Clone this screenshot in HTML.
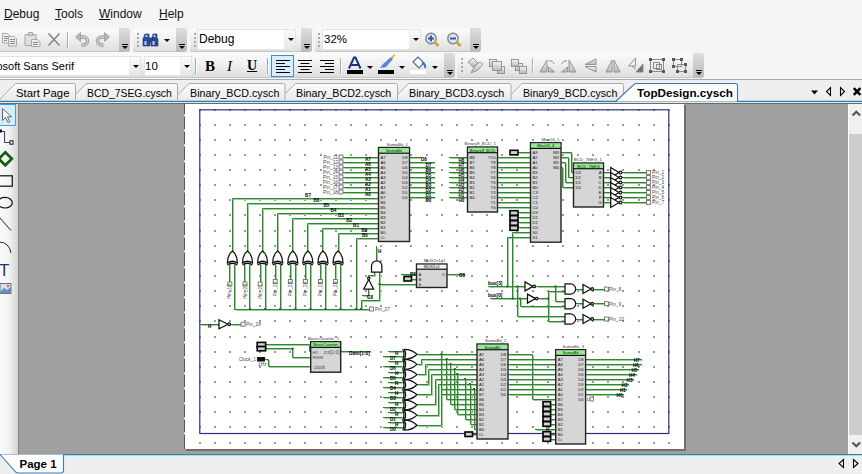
<!DOCTYPE html>
<html><head><meta charset="utf-8">
<style>
*{margin:0;padding:0;box-sizing:border-box}
html,body{width:862px;height:474px;overflow:hidden;background:#f5f5f5;font-family:"Liberation Sans",sans-serif;position:relative}
.menu{position:absolute;top:7px;font-size:12px;color:#111;line-height:14px}
.menu u{text-decoration:underline}
.seg{position:absolute;background:linear-gradient(#fbfbfb,#f0f0f0 45%,#dcdcdc);border-radius:3px 0 0 3px;box-shadow:inset 0 -1px #c6c6c6}
.chev{position:absolute;background:linear-gradient(#dedede,#b9b9b9);border-radius:0 3px 3px 0}
.chev i{position:absolute;left:2.5px;bottom:7px;width:6px;height:1.5px;background:#000}
.chev b{position:absolute;left:2.5px;bottom:3px;width:0;height:0;border-left:3px solid transparent;border-right:3px solid transparent;border-top:3px solid #000}
.gd{position:absolute;width:2px;height:2px;background:#a8a8a8}
.arr{position:absolute;width:0;height:0;border-left:3px solid transparent;border-right:3px solid transparent;border-top:3px solid #000}
.sep{position:absolute;width:2px;background:#a8a8a8;border-right:1px solid #fff}
.combo{position:absolute;background:#fff;border:1px solid #e4e4e4}
.combo span{position:absolute;top:2px;font-size:12px;color:#000;white-space:nowrap;line-height:14px}
.cbtn{position:absolute;right:0;top:0;bottom:0;background:linear-gradient(#fafafa,#e6e6e6);border-left:1px solid #eee}
.ico{position:absolute;left:0;top:0}
.fmt{position:absolute;color:#000;line-height:16px}
.hl{position:absolute;background:#d8eefb;border:1px solid #3d8ed0}

.w{fill:none;stroke:#378237;stroke-width:1;stroke-linecap:square}
.wl{fill:none;stroke:#98d098;stroke-width:1}
.j{fill:#2a6a2a}
.g{fill:#fff;stroke:#111;stroke-width:1.25}
.blk{fill:#d6d6d6;stroke:#222;stroke-width:1.4}
.pin{fill:#f4f4f4;stroke:#666;stroke-width:0.8}
.pin2{fill:#d0d0d0;stroke:#000;stroke-width:1.6}
text{font-family:"Liberation Sans",sans-serif}
.t{font-size:4.6px;fill:#000;font-weight:bold}
.tl{font-size:4.8px;fill:#000;font-weight:bold}
.tb{font-size:4.2px;fill:#111}
.tp{font-size:4.8px;fill:#4a4a4a}
.tt{font-size:4.4px;fill:#333}
.th{font-size:4.2px;fill:#0a200a}
.tab{position:absolute;top:86.5px;font-size:11.5px;color:#000;white-space:nowrap;line-height:13px}
</style></head><body>
<div class="menu" style="left:4px"><u>D</u>ebug</div>
<div class="menu" style="left:55px"><u>T</u>ools</div>
<div class="menu" style="left:99px"><u>W</u>indow</div>
<div class="menu" style="left:159px"><u>H</u>elp</div>
<div class="seg" style="left:-6px;top:28px;width:125px;height:24px;"></div><div class="chev" style="left:119px;top:28px;width:11px;height:24px;"><i></i><b></b></div>
<div class="seg" style="left:133px;top:28px;width:43px;height:24px;"></div><div class="chev" style="left:176px;top:28px;width:11px;height:24px;"><i></i><b></b></div>
<div class="seg" style="left:190px;top:28px;width:111px;height:24px;"></div><div class="chev" style="left:301px;top:28px;width:11px;height:24px;"><i></i><b></b></div>
<div class="seg" style="left:315px;top:28px;width:155px;height:24px;"></div><div class="chev" style="left:470px;top:28px;width:11px;height:24px;"><i></i><b></b></div>
<div class="seg" style="left:-6px;top:53px;width:450px;height:25px;"></div><div class="chev" style="left:444px;top:53px;width:11px;height:25px;"><i></i><b></b></div>
<div class="seg" style="left:457px;top:53px;width:236px;height:25px;"></div><div class="chev" style="left:693px;top:53px;width:11px;height:25px;"><i></i><b></b></div>

<svg class="ico" width="862" height="80" viewBox="0 0 862 80">
 <g stroke="#a9a9a9" fill="#ececec" stroke-width="1">
  <path d="M2.5 33.5h5l2.5 2.5v7h-7.5z"/>
  <path d="M8.5 36.5h5.5l2.5 2.5v7h-8z"/>
  <path d="M25 34.5h11v11h-11z" fill="#e0e0e0"/>
  <path d="M28.5 32.5h4v3h-4z" fill="#d0d0d0"/>
  <path d="M31.5 39.5h6l2.5 2.5v4.5h-8.5z"/>
 </g>
 <g stroke="#8c8c8c" stroke-width="1"><path d="M4 36.5h4M4 38.5h4M4 40.5h3M10 39.5h5M10 41.5h5M10 43.5h5M33 42.5h5M33 44.5h5"/></g>
 <path d="M48.5 33.5l11 12M59.5 33.5l-11 12" stroke="#8a8a8a" stroke-width="1.7"/>
 <path d="M79 37h4.5a4 4 0 0 1 0 8h-2" stroke="#9c9c9c" stroke-width="3.4" fill="none"/>
 <path d="M79 37h4.5a4 4 0 0 1 0 8h-2" stroke="#cfcfcf" stroke-width="1.6" fill="none"/>
 <path d="M75.5 37l5-4.5v9z" fill="#b4b4b4" stroke="#9c9c9c" stroke-width="0.8"/>
 <path d="M106 37h-4.5a4 4 0 0 0 0 8h2" stroke="#9c9c9c" stroke-width="3.4" fill="none"/>
 <path d="M106 37h-4.5a4 4 0 0 0 0 8h2" stroke="#cfcfcf" stroke-width="1.6" fill="none"/>
 <path d="M109.5 37l-5-4.5v9z" fill="#b4b4b4" stroke="#9c9c9c" stroke-width="0.8"/>
 <g fill="#2a4c9c" stroke="#1a2f6a" stroke-width="0.6">
  <path d="M145 34h4v4h1v8h-7v-7z"/><path d="M153 34h4v4l1 1v7h-7v-8h1z"/>
  <rect x="149.5" y="38" width="3" height="4"/>
 </g>
 <g fill="#b8d0f4"><rect x="144.5" y="41" width="2" height="4"/><rect x="152.5" y="41" width="2" height="4"/><rect x="145.5" y="35" width="2" height="2"/><rect x="153.5" y="35" width="2" height="2"/></g>
 <circle cx="431" cy="38.5" r="5.2" fill="#dde8f6" stroke="#7a8590" stroke-width="1.4"/>
 <path d="M428 38.5h6M431 35.5v6" stroke="#3a5a90" stroke-width="2"/>
 <path d="M434.5 42l4 4" stroke="#c8a840" stroke-width="3"/>
 <circle cx="453" cy="38.5" r="5.2" fill="#dde8f6" stroke="#7a8590" stroke-width="1.4"/>
 <path d="M450 38.5h6" stroke="#3a5a90" stroke-width="2"/>
 <path d="M456.5 42l4 4" stroke="#c8a840" stroke-width="3"/>
</svg>
<div class="sep" style="left:67px;top:32px;height:16px"></div>
<div class="gd" style="left:137px;top:33px"></div><div class="gd" style="left:137px;top:37px"></div><div class="gd" style="left:137px;top:41px"></div><div class="gd" style="left:137px;top:45px"></div>
<div class="arr" style="left:164px;top:39px;border-top-color:#000"></div>
<div class="gd" style="left:194px;top:33px"></div><div class="gd" style="left:194px;top:37px"></div><div class="gd" style="left:194px;top:41px"></div><div class="gd" style="left:194px;top:45px"></div>
<div class="combo" style="left:197px;top:29px;width:99px;height:21px"><span style="left:1px;font-size:12px">Debug</span><div class="cbtn" style="width:11px"></div></div><div class="arr" style="left:288px;top:38px;border-top-color:#000"></div>
<div class="gd" style="left:318px;top:33px"></div><div class="gd" style="left:318px;top:37px"></div><div class="gd" style="left:318px;top:41px"></div><div class="gd" style="left:318px;top:45px"></div>
<div class="combo" style="left:322px;top:29px;width:99px;height:21px"><span style="left:1px;font-size:11.5px">32%</span><div class="cbtn" style="width:11px"></div></div><div class="arr" style="left:413px;top:38px;border-top-color:#000"></div>
<div class="combo" style="left:-6px;top:56px;width:147px;height:20px"><span style="left:1.4px;font-size:11px">osoft Sans Serif</span><div class="cbtn" style="width:11px"></div></div><div class="arr" style="left:133px;top:65px;border-top-color:#000"></div>
<div class="combo" style="left:144px;top:56px;width:48px;height:20px"><span style="left:0px;font-size:11.5px">10</span><div class="cbtn" style="width:11px"></div></div><div class="arr" style="left:184px;top:65px;border-top-color:#000"></div>
<div class="sep" style="left:195px;top:58px;height:16px"></div>
<div class="fmt" style="left:205px;top:58px;font-family:'Liberation Serif',serif;font-weight:bold;font-size:15px">B</div>
<div class="fmt" style="left:227px;top:58px;font-family:'Liberation Serif',serif;font-style:italic;font-size:15px">I</div>
<div class="fmt" style="left:247px;top:58px;font-family:'Liberation Serif',serif;font-weight:bold;font-size:14px;text-decoration:underline">U</div>
<div class="sep" style="left:267px;top:58px;height:16px"></div>
<div class="hl" style="left:271px;top:55px;width:23px;height:22px"></div>

<svg class="ico" width="862" height="80" viewBox="0 0 862 80">
 <g stroke="#000" stroke-width="1.2">
  <path d="M276 60.5h14M276 63.5h9M276 66.5h14M276 69.5h9M276 72.5h14"/>
  <path d="M298 60.5h14M300.5 63.5h9M298 66.5h14M300.5 69.5h9M298 72.5h14"/>
  <path d="M320 60.5h14M325 63.5h9M320 66.5h14M325 69.5h9M320 72.5h14"/>
 </g>
 <path d="M347 70h16v4h-16z" fill="#000"/>
 <path d="M349 68.5l5-11h1.5l5 11M351 65h8" stroke="#1f2f80" stroke-width="2" fill="none"/>
 <path d="M378 70h16v4h-16z" fill="#000"/>
 <path d="M380 68l3-4 8-7 2 2-7 8z" fill="#5a86d0"/><path d="M391 57l3-3 1.5 1.5-3 3z" fill="#e8c040"/>
 <path d="M410 70h16v4h-16z" fill="#fff"/>
 <path d="M413 62l5-5 6 6-5 5z" fill="#fff" stroke="#4a6aa0" stroke-width="1.2"/><path d="M422 63q4 1 3 5" stroke="#3a70c0" stroke-width="2" fill="none"/>
</svg>
<div class="sep" style="left:340px;top:58px;height:16px"></div>
<div class="arr" style="left:367px;top:66px;border-top-color:#000"></div>
<div class="arr" style="left:399px;top:66px;border-top-color:#000"></div>
<div class="arr" style="left:432px;top:66px;border-top-color:#000"></div>
<div class="gd" style="left:461px;top:58px"></div><div class="gd" style="left:461px;top:62px"></div><div class="gd" style="left:461px;top:66px"></div><div class="gd" style="left:461px;top:70px"></div>

<svg class="ico" width="862" height="80" viewBox="0 0 862 80">
 <defs><linearGradient id="ig" x1="0" y1="0" x2="0" y2="1"><stop offset="0" stop-color="#f4f4f4"/><stop offset="1" stop-color="#b8b8b8"/></linearGradient></defs>
 <g stroke="#8e8e8e" stroke-width="0.9" fill="url(#ig)">
  <path d="M468 62l5-4 5 5-5 4z"/><path d="M471 73l3-6 6-5 3 2-5 6z"/>
  <rect x="489.5" y="59.5" width="7" height="7"/><rect x="497.5" y="66.5" width="7" height="7"/><rect x="492.5" y="61.5" width="9" height="9"/>
  <rect x="515.5" y="63.5" width="7" height="7"/><rect x="511.5" y="59.5" width="7" height="7"/><rect x="519.5" y="66.5" width="7" height="7"/>
 </g>
 <path d="M532.5 58v15" stroke="#b0b0b0"/><path d="M533.5 58v15" stroke="#fff"/>
 <g fill="url(#ig)" stroke="#8a8a8a" stroke-width="0.9">
  <path d="M540 72l7-12v12z"/><path d="M548.5 72v-5l6 5z"/>
  <path d="M576 72l-7-12v12z"/><path d="M567.5 72v-5l-6 5z"/>
  <path d="M596 59l-11 5.5h11z"/><path d="M596 72l-11-5.5h11z"/>
  <path d="M612 60l-6 12h6z"/><path d="M614 60l6 12h-6z"/>
  <path d="M628.5 66l7-8v8z" fill="none"/><path d="M643 64l-7 8h7z" fill="#707070"/>
 </g>
 <path d="M549 61a4 4 0 0 1 5 3M567 61a4 4 0 0 0-5 3M632 66l4 3" stroke="#8a8a8a" fill="none"/>
 <g fill="none" stroke="#8a8a8a" stroke-width="1">
  <rect x="650.5" y="59.5" width="13" height="12"/><rect x="653.5" y="62.5" width="6" height="6"/><rect x="656.5" y="64.5" width="5" height="5"/>
  <rect x="673.5" y="59.5" width="8" height="7"/><rect x="677.5" y="64.5" width="8" height="7"/>
 </g>
 <g fill="#585858"><path d="M649 58h3v3h-3zM662 58h3v3h-3zM649 70h3v3h-3zM662 70h3v3h-3z"/><path d="M672 58h3v3h-3zM680 58h3v3h-3zM676 70h3v3h-3zM684 70h3v3h-3zM684 63h3v3h-3zM672 65h3v3h-3z"/></g>
</svg>
<div style="position:absolute;left:0;top:79px;width:862px;height:1px;background:#a9a9a9"></div>
<div style="position:absolute;left:0;top:80px;width:862px;height:22px;background:#efefef"></div>
<div style="position:absolute;left:0;top:454px;width:862px;height:20px;background:#efefef"></div>
<svg class="ico" width="862" height="110" viewBox="0 0 862 110">
<defs><linearGradient id="tg" x1="0" y1="0" x2="0" y2="1"><stop offset="0" stop-color="#fdfdfd"/><stop offset="1" stop-color="#e9e9e9"/></linearGradient></defs>
<path d="M505.0 100.5 L522.0 83.5 H621.5 Q623.5 83.5 623.5 85.5 V100.5" fill="url(#tg)" stroke="#a9a9a9" stroke-width="1"/>
<path d="M391.5 100.5 L408.5 83.5 H509.0 Q511.0 83.5 511.0 85.5 V100.5" fill="url(#tg)" stroke="#a9a9a9" stroke-width="1"/>
<path d="M278.5 100.5 L295.5 83.5 H395.5 Q397.5 83.5 397.5 85.5 V100.5" fill="url(#tg)" stroke="#a9a9a9" stroke-width="1"/>
<path d="M172.0 100.5 L189.0 83.5 H283.0 Q285.0 83.5 285.0 85.5 V100.5" fill="url(#tg)" stroke="#a9a9a9" stroke-width="1"/>
<path d="M69.5 100.5 L86.5 83.5 H175.5 Q177.5 83.5 177.5 85.5 V100.5" fill="url(#tg)" stroke="#a9a9a9" stroke-width="1"/>
<path d="M-1.5 100.5 L15.5 83.5 H73.5 Q75.5 83.5 75.5 85.5 V100.5" fill="url(#tg)" stroke="#a9a9a9" stroke-width="1"/>
<path d="M0 100.5H862" stroke="#a6daf2" stroke-width="1"/><path d="M0 101.5H616M737.5 101.5H862" stroke="#3c78a8" stroke-width="1"/>
<path d="M615.5 101.5 L635 83.5 H735.5 Q737.5 83.5 737.5 85.5 V101.5 Z" fill="#fff" stroke="#3a7ab0" stroke-width="1.1"/>
<path d="M616.8 102.2 H736.8" stroke="#fff" stroke-width="1.4"/>
<path d="M811 90.5h7l-3.5 4z" fill="#000"/>
<path d="M830.5 87.5v8l-4-4z" fill="none" stroke="#000" stroke-width="1.1"/>
<path d="M840.5 87.5v8l4-4z" fill="none" stroke="#000" stroke-width="1.1"/>
<path d="M853.8 88.2l6.6 6.6M860.4 88.2l-6.6 6.6" stroke="#000" stroke-width="2.5"/>
</svg>
<div class="tab" style="left:16px;transform:scaleX(0.983);transform-origin:0 0">Start Page</div>
<div class="tab" style="left:87px;transform:scaleX(0.903);transform-origin:0 0">BCD_7SEG.cysch</div>
<div class="tab" style="left:189.5px;transform:scaleX(0.932);transform-origin:0 0">Binary_BCD.cysch</div>
<div class="tab" style="left:296px;transform:scaleX(0.932);transform-origin:0 0">Binary_BCD2.cysch</div>
<div class="tab" style="left:409px;transform:scaleX(0.932);transform-origin:0 0">Binary_BCD3.cysch</div>
<div class="tab" style="left:522.5px;transform:scaleX(0.922);transform-origin:0 0">Binary9_BCD.cysch</div>
<div class="tab" style="left:637px;font-weight:bold;transform:scaleX(1.017);transform-origin:0 0">TopDesign.cysch</div>
<div style="position:absolute;left:0;top:102px;width:862px;height:1px;background:#e6e6e6"></div>
<div style="position:absolute;left:0;top:103px;width:862px;height:1px;background:#6a6a6a"></div>
<div id="tbx" style="position:absolute;left:0;top:104px;width:18px;height:350px;background:linear-gradient(90deg,#fafafa,#f2f2f2 50%,#d4d4d4)"></div>
<div style="position:absolute;left:18px;top:104px;width:830px;height:350px;background:#a0a0a0;border-left:1px solid #808080"></div>
<div style="position:absolute;left:848px;top:104px;width:14px;height:350px;background:#f0f0f0;border-left:1px solid #fff"></div>
<div style="position:absolute;left:849px;top:134px;width:13px;height:301px;background:#cdcdcd"></div>
<svg class="ico" width="862" height="474" viewBox="0 0 862 474"><path d="M852.5 115.5l3.8-3.8 3.8 3.8M852.5 442.5l3.8 3.8 3.8-3.8" fill="none" stroke="#555" stroke-width="2.2"/></svg>
<div style="position:absolute;left:0;top:454px;width:862px;height:1px;background:#3f7fae"></div>
<div style="position:absolute;left:0;top:455px;width:862px;height:1px;background:#a6daf2"></div>
<svg class="ico" width="862" height="474" viewBox="0 0 862 474"><path d="M0 454.5 L16 472.3 Q17 473 19 473 H61 Q63.5 473 63.5 470.5 V454.5" fill="#fff" stroke="#3a7fb5" stroke-width="1.1"/><path d="M843.5 459.5v8l-4.5-4z M853.5 459.5v8l4.5-4z" fill="none" stroke="#000" stroke-width="1.1"/></svg>
<div class="tab" style="left:19.5px;top:458px;font-weight:bold;font-size:11.5px">Page 1</div>
<div style="position:absolute;left:186px;top:105px;width:500px;height:346px;background:#6e6e6e"></div>
<div style="position:absolute;left:184px;top:104px;width:500px;height:345px;background:#fff"></div>
<div style="position:absolute;left:184px;top:104px;width:1px;height:345px;background:repeating-linear-gradient(#585858 0 13.14px,#fff 13.14px 15.14px);background-position:0 -2.6px"></div>
<svg class="ico" width="862" height="474" viewBox="0 0 862 474"><defs><clipPath id="pc"><rect x="185" y="103" width="499" height="346"/></clipPath></defs><g clip-path="url(#pc)"><path d="M199 109h2v2h-2zM199 124h2v2h-2zM199 139h2v2h-2zM199 154h2v2h-2zM199 169h2v2h-2zM199 184h2v2h-2zM199 199h2v2h-2zM199 214h2v2h-2zM199 230h2v2h-2zM199 245h2v2h-2zM199 260h2v2h-2zM199 275h2v2h-2zM199 290h2v2h-2zM199 305h2v2h-2zM199 320h2v2h-2zM199 336h2v2h-2zM199 351h2v2h-2zM199 366h2v2h-2zM199 381h2v2h-2zM199 396h2v2h-2zM199 411h2v2h-2zM199 426h2v2h-2zM199 442h2v2h-2zM214 109h2v2h-2zM214 124h2v2h-2zM214 139h2v2h-2zM214 154h2v2h-2zM214 169h2v2h-2zM214 184h2v2h-2zM214 199h2v2h-2zM214 214h2v2h-2zM214 230h2v2h-2zM214 245h2v2h-2zM214 260h2v2h-2zM214 275h2v2h-2zM214 290h2v2h-2zM214 305h2v2h-2zM214 320h2v2h-2zM214 336h2v2h-2zM214 351h2v2h-2zM214 366h2v2h-2zM214 381h2v2h-2zM214 396h2v2h-2zM214 411h2v2h-2zM214 426h2v2h-2zM214 442h2v2h-2zM229 109h2v2h-2zM229 124h2v2h-2zM229 139h2v2h-2zM229 154h2v2h-2zM229 169h2v2h-2zM229 184h2v2h-2zM229 199h2v2h-2zM229 214h2v2h-2zM229 230h2v2h-2zM229 245h2v2h-2zM229 260h2v2h-2zM229 275h2v2h-2zM229 290h2v2h-2zM229 305h2v2h-2zM229 320h2v2h-2zM229 336h2v2h-2zM229 351h2v2h-2zM229 366h2v2h-2zM229 381h2v2h-2zM229 396h2v2h-2zM229 411h2v2h-2zM229 426h2v2h-2zM229 442h2v2h-2zM244 109h2v2h-2zM244 124h2v2h-2zM244 139h2v2h-2zM244 154h2v2h-2zM244 169h2v2h-2zM244 184h2v2h-2zM244 199h2v2h-2zM244 214h2v2h-2zM244 230h2v2h-2zM244 245h2v2h-2zM244 260h2v2h-2zM244 275h2v2h-2zM244 290h2v2h-2zM244 305h2v2h-2zM244 320h2v2h-2zM244 336h2v2h-2zM244 351h2v2h-2zM244 366h2v2h-2zM244 381h2v2h-2zM244 396h2v2h-2zM244 411h2v2h-2zM244 426h2v2h-2zM244 442h2v2h-2zM259 109h2v2h-2zM259 124h2v2h-2zM259 139h2v2h-2zM259 154h2v2h-2zM259 169h2v2h-2zM259 184h2v2h-2zM259 199h2v2h-2zM259 214h2v2h-2zM259 230h2v2h-2zM259 245h2v2h-2zM259 260h2v2h-2zM259 275h2v2h-2zM259 290h2v2h-2zM259 305h2v2h-2zM259 320h2v2h-2zM259 336h2v2h-2zM259 351h2v2h-2zM259 366h2v2h-2zM259 381h2v2h-2zM259 396h2v2h-2zM259 411h2v2h-2zM259 426h2v2h-2zM259 442h2v2h-2zM274 109h2v2h-2zM274 124h2v2h-2zM274 139h2v2h-2zM274 154h2v2h-2zM274 169h2v2h-2zM274 184h2v2h-2zM274 199h2v2h-2zM274 214h2v2h-2zM274 230h2v2h-2zM274 245h2v2h-2zM274 260h2v2h-2zM274 275h2v2h-2zM274 290h2v2h-2zM274 305h2v2h-2zM274 320h2v2h-2zM274 336h2v2h-2zM274 351h2v2h-2zM274 366h2v2h-2zM274 381h2v2h-2zM274 396h2v2h-2zM274 411h2v2h-2zM274 426h2v2h-2zM274 442h2v2h-2zM289 109h2v2h-2zM289 124h2v2h-2zM289 139h2v2h-2zM289 154h2v2h-2zM289 169h2v2h-2zM289 184h2v2h-2zM289 199h2v2h-2zM289 214h2v2h-2zM289 230h2v2h-2zM289 245h2v2h-2zM289 260h2v2h-2zM289 275h2v2h-2zM289 290h2v2h-2zM289 305h2v2h-2zM289 320h2v2h-2zM289 336h2v2h-2zM289 351h2v2h-2zM289 366h2v2h-2zM289 381h2v2h-2zM289 396h2v2h-2zM289 411h2v2h-2zM289 426h2v2h-2zM289 442h2v2h-2zM304 109h2v2h-2zM304 124h2v2h-2zM304 139h2v2h-2zM304 154h2v2h-2zM304 169h2v2h-2zM304 184h2v2h-2zM304 199h2v2h-2zM304 214h2v2h-2zM304 230h2v2h-2zM304 245h2v2h-2zM304 260h2v2h-2zM304 275h2v2h-2zM304 290h2v2h-2zM304 305h2v2h-2zM304 320h2v2h-2zM304 336h2v2h-2zM304 351h2v2h-2zM304 366h2v2h-2zM304 381h2v2h-2zM304 396h2v2h-2zM304 411h2v2h-2zM304 426h2v2h-2zM304 442h2v2h-2zM320 109h2v2h-2zM320 124h2v2h-2zM320 139h2v2h-2zM320 154h2v2h-2zM320 169h2v2h-2zM320 184h2v2h-2zM320 199h2v2h-2zM320 214h2v2h-2zM320 230h2v2h-2zM320 245h2v2h-2zM320 260h2v2h-2zM320 275h2v2h-2zM320 290h2v2h-2zM320 305h2v2h-2zM320 320h2v2h-2zM320 336h2v2h-2zM320 351h2v2h-2zM320 366h2v2h-2zM320 381h2v2h-2zM320 396h2v2h-2zM320 411h2v2h-2zM320 426h2v2h-2zM320 442h2v2h-2zM335 109h2v2h-2zM335 124h2v2h-2zM335 139h2v2h-2zM335 154h2v2h-2zM335 169h2v2h-2zM335 184h2v2h-2zM335 199h2v2h-2zM335 214h2v2h-2zM335 230h2v2h-2zM335 245h2v2h-2zM335 260h2v2h-2zM335 275h2v2h-2zM335 290h2v2h-2zM335 305h2v2h-2zM335 320h2v2h-2zM335 336h2v2h-2zM335 351h2v2h-2zM335 366h2v2h-2zM335 381h2v2h-2zM335 396h2v2h-2zM335 411h2v2h-2zM335 426h2v2h-2zM335 442h2v2h-2zM350 109h2v2h-2zM350 124h2v2h-2zM350 139h2v2h-2zM350 154h2v2h-2zM350 169h2v2h-2zM350 184h2v2h-2zM350 199h2v2h-2zM350 214h2v2h-2zM350 230h2v2h-2zM350 245h2v2h-2zM350 260h2v2h-2zM350 275h2v2h-2zM350 290h2v2h-2zM350 305h2v2h-2zM350 320h2v2h-2zM350 336h2v2h-2zM350 351h2v2h-2zM350 366h2v2h-2zM350 381h2v2h-2zM350 396h2v2h-2zM350 411h2v2h-2zM350 426h2v2h-2zM350 442h2v2h-2zM365 109h2v2h-2zM365 124h2v2h-2zM365 139h2v2h-2zM365 154h2v2h-2zM365 169h2v2h-2zM365 184h2v2h-2zM365 199h2v2h-2zM365 214h2v2h-2zM365 230h2v2h-2zM365 245h2v2h-2zM365 260h2v2h-2zM365 275h2v2h-2zM365 290h2v2h-2zM365 305h2v2h-2zM365 320h2v2h-2zM365 336h2v2h-2zM365 351h2v2h-2zM365 366h2v2h-2zM365 381h2v2h-2zM365 396h2v2h-2zM365 411h2v2h-2zM365 426h2v2h-2zM365 442h2v2h-2zM380 109h2v2h-2zM380 124h2v2h-2zM380 139h2v2h-2zM380 154h2v2h-2zM380 169h2v2h-2zM380 184h2v2h-2zM380 199h2v2h-2zM380 214h2v2h-2zM380 230h2v2h-2zM380 245h2v2h-2zM380 260h2v2h-2zM380 275h2v2h-2zM380 290h2v2h-2zM380 305h2v2h-2zM380 320h2v2h-2zM380 336h2v2h-2zM380 351h2v2h-2zM380 366h2v2h-2zM380 381h2v2h-2zM380 396h2v2h-2zM380 411h2v2h-2zM380 426h2v2h-2zM380 442h2v2h-2zM395 109h2v2h-2zM395 124h2v2h-2zM395 139h2v2h-2zM395 154h2v2h-2zM395 169h2v2h-2zM395 184h2v2h-2zM395 199h2v2h-2zM395 214h2v2h-2zM395 230h2v2h-2zM395 245h2v2h-2zM395 260h2v2h-2zM395 275h2v2h-2zM395 290h2v2h-2zM395 305h2v2h-2zM395 320h2v2h-2zM395 336h2v2h-2zM395 351h2v2h-2zM395 366h2v2h-2zM395 381h2v2h-2zM395 396h2v2h-2zM395 411h2v2h-2zM395 426h2v2h-2zM395 442h2v2h-2zM410 109h2v2h-2zM410 124h2v2h-2zM410 139h2v2h-2zM410 154h2v2h-2zM410 169h2v2h-2zM410 184h2v2h-2zM410 199h2v2h-2zM410 214h2v2h-2zM410 230h2v2h-2zM410 245h2v2h-2zM410 260h2v2h-2zM410 275h2v2h-2zM410 290h2v2h-2zM410 305h2v2h-2zM410 320h2v2h-2zM410 336h2v2h-2zM410 351h2v2h-2zM410 366h2v2h-2zM410 381h2v2h-2zM410 396h2v2h-2zM410 411h2v2h-2zM410 426h2v2h-2zM410 442h2v2h-2zM426 109h2v2h-2zM426 124h2v2h-2zM426 139h2v2h-2zM426 154h2v2h-2zM426 169h2v2h-2zM426 184h2v2h-2zM426 199h2v2h-2zM426 214h2v2h-2zM426 230h2v2h-2zM426 245h2v2h-2zM426 260h2v2h-2zM426 275h2v2h-2zM426 290h2v2h-2zM426 305h2v2h-2zM426 320h2v2h-2zM426 336h2v2h-2zM426 351h2v2h-2zM426 366h2v2h-2zM426 381h2v2h-2zM426 396h2v2h-2zM426 411h2v2h-2zM426 426h2v2h-2zM426 442h2v2h-2zM441 109h2v2h-2zM441 124h2v2h-2zM441 139h2v2h-2zM441 154h2v2h-2zM441 169h2v2h-2zM441 184h2v2h-2zM441 199h2v2h-2zM441 214h2v2h-2zM441 230h2v2h-2zM441 245h2v2h-2zM441 260h2v2h-2zM441 275h2v2h-2zM441 290h2v2h-2zM441 305h2v2h-2zM441 320h2v2h-2zM441 336h2v2h-2zM441 351h2v2h-2zM441 366h2v2h-2zM441 381h2v2h-2zM441 396h2v2h-2zM441 411h2v2h-2zM441 426h2v2h-2zM441 442h2v2h-2zM456 109h2v2h-2zM456 124h2v2h-2zM456 139h2v2h-2zM456 154h2v2h-2zM456 169h2v2h-2zM456 184h2v2h-2zM456 199h2v2h-2zM456 214h2v2h-2zM456 230h2v2h-2zM456 245h2v2h-2zM456 260h2v2h-2zM456 275h2v2h-2zM456 290h2v2h-2zM456 305h2v2h-2zM456 320h2v2h-2zM456 336h2v2h-2zM456 351h2v2h-2zM456 366h2v2h-2zM456 381h2v2h-2zM456 396h2v2h-2zM456 411h2v2h-2zM456 426h2v2h-2zM456 442h2v2h-2zM471 109h2v2h-2zM471 124h2v2h-2zM471 139h2v2h-2zM471 154h2v2h-2zM471 169h2v2h-2zM471 184h2v2h-2zM471 199h2v2h-2zM471 214h2v2h-2zM471 230h2v2h-2zM471 245h2v2h-2zM471 260h2v2h-2zM471 275h2v2h-2zM471 290h2v2h-2zM471 305h2v2h-2zM471 320h2v2h-2zM471 336h2v2h-2zM471 351h2v2h-2zM471 366h2v2h-2zM471 381h2v2h-2zM471 396h2v2h-2zM471 411h2v2h-2zM471 426h2v2h-2zM471 442h2v2h-2zM486 109h2v2h-2zM486 124h2v2h-2zM486 139h2v2h-2zM486 154h2v2h-2zM486 169h2v2h-2zM486 184h2v2h-2zM486 199h2v2h-2zM486 214h2v2h-2zM486 230h2v2h-2zM486 245h2v2h-2zM486 260h2v2h-2zM486 275h2v2h-2zM486 290h2v2h-2zM486 305h2v2h-2zM486 320h2v2h-2zM486 336h2v2h-2zM486 351h2v2h-2zM486 366h2v2h-2zM486 381h2v2h-2zM486 396h2v2h-2zM486 411h2v2h-2zM486 426h2v2h-2zM486 442h2v2h-2zM501 109h2v2h-2zM501 124h2v2h-2zM501 139h2v2h-2zM501 154h2v2h-2zM501 169h2v2h-2zM501 184h2v2h-2zM501 199h2v2h-2zM501 214h2v2h-2zM501 230h2v2h-2zM501 245h2v2h-2zM501 260h2v2h-2zM501 275h2v2h-2zM501 290h2v2h-2zM501 305h2v2h-2zM501 320h2v2h-2zM501 336h2v2h-2zM501 351h2v2h-2zM501 366h2v2h-2zM501 381h2v2h-2zM501 396h2v2h-2zM501 411h2v2h-2zM501 426h2v2h-2zM501 442h2v2h-2zM516 109h2v2h-2zM516 124h2v2h-2zM516 139h2v2h-2zM516 154h2v2h-2zM516 169h2v2h-2zM516 184h2v2h-2zM516 199h2v2h-2zM516 214h2v2h-2zM516 230h2v2h-2zM516 245h2v2h-2zM516 260h2v2h-2zM516 275h2v2h-2zM516 290h2v2h-2zM516 305h2v2h-2zM516 320h2v2h-2zM516 336h2v2h-2zM516 351h2v2h-2zM516 366h2v2h-2zM516 381h2v2h-2zM516 396h2v2h-2zM516 411h2v2h-2zM516 426h2v2h-2zM516 442h2v2h-2zM532 109h2v2h-2zM532 124h2v2h-2zM532 139h2v2h-2zM532 154h2v2h-2zM532 169h2v2h-2zM532 184h2v2h-2zM532 199h2v2h-2zM532 214h2v2h-2zM532 230h2v2h-2zM532 245h2v2h-2zM532 260h2v2h-2zM532 275h2v2h-2zM532 290h2v2h-2zM532 305h2v2h-2zM532 320h2v2h-2zM532 336h2v2h-2zM532 351h2v2h-2zM532 366h2v2h-2zM532 381h2v2h-2zM532 396h2v2h-2zM532 411h2v2h-2zM532 426h2v2h-2zM532 442h2v2h-2zM547 109h2v2h-2zM547 124h2v2h-2zM547 139h2v2h-2zM547 154h2v2h-2zM547 169h2v2h-2zM547 184h2v2h-2zM547 199h2v2h-2zM547 214h2v2h-2zM547 230h2v2h-2zM547 245h2v2h-2zM547 260h2v2h-2zM547 275h2v2h-2zM547 290h2v2h-2zM547 305h2v2h-2zM547 320h2v2h-2zM547 336h2v2h-2zM547 351h2v2h-2zM547 366h2v2h-2zM547 381h2v2h-2zM547 396h2v2h-2zM547 411h2v2h-2zM547 426h2v2h-2zM547 442h2v2h-2zM562 109h2v2h-2zM562 124h2v2h-2zM562 139h2v2h-2zM562 154h2v2h-2zM562 169h2v2h-2zM562 184h2v2h-2zM562 199h2v2h-2zM562 214h2v2h-2zM562 230h2v2h-2zM562 245h2v2h-2zM562 260h2v2h-2zM562 275h2v2h-2zM562 290h2v2h-2zM562 305h2v2h-2zM562 320h2v2h-2zM562 336h2v2h-2zM562 351h2v2h-2zM562 366h2v2h-2zM562 381h2v2h-2zM562 396h2v2h-2zM562 411h2v2h-2zM562 426h2v2h-2zM562 442h2v2h-2zM577 109h2v2h-2zM577 124h2v2h-2zM577 139h2v2h-2zM577 154h2v2h-2zM577 169h2v2h-2zM577 184h2v2h-2zM577 199h2v2h-2zM577 214h2v2h-2zM577 230h2v2h-2zM577 245h2v2h-2zM577 260h2v2h-2zM577 275h2v2h-2zM577 290h2v2h-2zM577 305h2v2h-2zM577 320h2v2h-2zM577 336h2v2h-2zM577 351h2v2h-2zM577 366h2v2h-2zM577 381h2v2h-2zM577 396h2v2h-2zM577 411h2v2h-2zM577 426h2v2h-2zM577 442h2v2h-2zM592 109h2v2h-2zM592 124h2v2h-2zM592 139h2v2h-2zM592 154h2v2h-2zM592 169h2v2h-2zM592 184h2v2h-2zM592 199h2v2h-2zM592 214h2v2h-2zM592 230h2v2h-2zM592 245h2v2h-2zM592 260h2v2h-2zM592 275h2v2h-2zM592 290h2v2h-2zM592 305h2v2h-2zM592 320h2v2h-2zM592 336h2v2h-2zM592 351h2v2h-2zM592 366h2v2h-2zM592 381h2v2h-2zM592 396h2v2h-2zM592 411h2v2h-2zM592 426h2v2h-2zM592 442h2v2h-2zM607 109h2v2h-2zM607 124h2v2h-2zM607 139h2v2h-2zM607 154h2v2h-2zM607 169h2v2h-2zM607 184h2v2h-2zM607 199h2v2h-2zM607 214h2v2h-2zM607 230h2v2h-2zM607 245h2v2h-2zM607 260h2v2h-2zM607 275h2v2h-2zM607 290h2v2h-2zM607 305h2v2h-2zM607 320h2v2h-2zM607 336h2v2h-2zM607 351h2v2h-2zM607 366h2v2h-2zM607 381h2v2h-2zM607 396h2v2h-2zM607 411h2v2h-2zM607 426h2v2h-2zM607 442h2v2h-2zM622 109h2v2h-2zM622 124h2v2h-2zM622 139h2v2h-2zM622 154h2v2h-2zM622 169h2v2h-2zM622 184h2v2h-2zM622 199h2v2h-2zM622 214h2v2h-2zM622 230h2v2h-2zM622 245h2v2h-2zM622 260h2v2h-2zM622 275h2v2h-2zM622 290h2v2h-2zM622 305h2v2h-2zM622 320h2v2h-2zM622 336h2v2h-2zM622 351h2v2h-2zM622 366h2v2h-2zM622 381h2v2h-2zM622 396h2v2h-2zM622 411h2v2h-2zM622 426h2v2h-2zM622 442h2v2h-2zM638 109h2v2h-2zM638 124h2v2h-2zM638 139h2v2h-2zM638 154h2v2h-2zM638 169h2v2h-2zM638 184h2v2h-2zM638 199h2v2h-2zM638 214h2v2h-2zM638 230h2v2h-2zM638 245h2v2h-2zM638 260h2v2h-2zM638 275h2v2h-2zM638 290h2v2h-2zM638 305h2v2h-2zM638 320h2v2h-2zM638 336h2v2h-2zM638 351h2v2h-2zM638 366h2v2h-2zM638 381h2v2h-2zM638 396h2v2h-2zM638 411h2v2h-2zM638 426h2v2h-2zM638 442h2v2h-2zM653 109h2v2h-2zM653 124h2v2h-2zM653 139h2v2h-2zM653 154h2v2h-2zM653 169h2v2h-2zM653 184h2v2h-2zM653 199h2v2h-2zM653 214h2v2h-2zM653 230h2v2h-2zM653 245h2v2h-2zM653 260h2v2h-2zM653 275h2v2h-2zM653 290h2v2h-2zM653 305h2v2h-2zM653 320h2v2h-2zM653 336h2v2h-2zM653 351h2v2h-2zM653 366h2v2h-2zM653 381h2v2h-2zM653 396h2v2h-2zM653 411h2v2h-2zM653 426h2v2h-2zM653 442h2v2h-2zM668 109h2v2h-2zM668 124h2v2h-2zM668 139h2v2h-2zM668 154h2v2h-2zM668 169h2v2h-2zM668 184h2v2h-2zM668 199h2v2h-2zM668 214h2v2h-2zM668 230h2v2h-2zM668 245h2v2h-2zM668 260h2v2h-2zM668 275h2v2h-2zM668 290h2v2h-2zM668 305h2v2h-2zM668 320h2v2h-2zM668 336h2v2h-2zM668 351h2v2h-2zM668 366h2v2h-2zM668 381h2v2h-2zM668 396h2v2h-2zM668 411h2v2h-2zM668 426h2v2h-2zM668 442h2v2h-2z" fill="#9a9a9a"/>
<rect x="199.8" y="109.8" width="469" height="323.7" fill="none" stroke="#2e2e7c" stroke-width="1.2"/>
<path d="M344.5 158.5 L379.5 158.5M344.5 163.5 L379.5 163.5M344.5 168.5 L379.5 168.5M344.5 173.5 L379.5 173.5M344.5 178.5 L379.5 178.5M344.5 183.5 L379.5 183.5M344.5 188.5 L379.5 188.5M344.5 193.5 L379.5 193.5M410.5 158.5 L421.5 158.5M410.5 163.5 L435.5 163.5M410.5 168.5 L435.5 168.5M410.5 173.5 L435.5 173.5M410.5 178.5 L435.5 178.5M410.5 183.5 L435.5 183.5M410.5 188.5 L435.5 188.5M410.5 193.5 L435.5 193.5M410.5 198.5 L435.5 198.5M233.5 252.5 L233.5 199.5 L379.5 199.5M230.5 264.5 L230.5 283.5M235.5 264.5 L235.5 310.5M248.5 252.5 L248.5 204.5 L379.5 204.5M245.5 264.5 L245.5 283.5M250.5 264.5 L250.5 310.5M263.5 252.5 L263.5 209.5 L379.5 209.5M261.5 264.5 L261.5 283.5M266.5 264.5 L266.5 310.5M278.5 252.5 L278.5 214.5 L379.5 214.5M276.5 264.5 L276.5 280.5M281.5 264.5 L281.5 310.5M293.5 252.5 L293.5 219.5 L379.5 219.5M291.5 264.5 L291.5 280.5M296.5 264.5 L296.5 310.5M308.5 252.5 L308.5 224.5 L379.5 224.5M306.5 264.5 L306.5 280.5M311.5 264.5 L311.5 310.5M323.5 252.5 L323.5 229.5 L379.5 229.5M321.5 264.5 L321.5 280.5M326.5 264.5 L326.5 310.5M339.5 252.5 L339.5 234.5 L379.5 234.5M336.5 264.5 L336.5 280.5M341.5 264.5 L341.5 310.5M236.5 310.5 L370.5 310.5M379.5 239.5 L357.5 239.5 L357.5 310.5M377.5 262.5 L377.5 247.5M375.5 273.5 L375.5 276.5 L369.5 276.5 L369.5 278.5M369.5 290.5 L369.5 296.5 L363.5 296.5M380.5 273.5 L380.5 301.5 L362.5 301.5 L362.5 310.5M380.5 285.5 L417.5 285.5M402.5 275.5 L417.5 275.5M412.5 280.5 L417.5 280.5M448.5 275.5 L465.5 275.5M450.5 158.5 L468.5 158.5M450.5 163.5 L468.5 163.5M450.5 168.5 L468.5 168.5M450.5 173.5 L468.5 173.5M450.5 178.5 L468.5 178.5M450.5 183.5 L468.5 183.5M450.5 188.5 L468.5 188.5M450.5 193.5 L468.5 193.5M450.5 198.5 L468.5 198.5M498.5 158.5 L531.5 158.5M498.5 163.5 L531.5 163.5M498.5 168.5 L531.5 168.5M498.5 173.5 L531.5 173.5M498.5 178.5 L531.5 178.5M498.5 183.5 L531.5 183.5M498.5 188.5 L531.5 188.5M498.5 193.5 L531.5 193.5M498.5 198.5 L531.5 198.5M498.5 203.5 L531.5 203.5M498.5 208.5 L531.5 208.5M519.5 153.5 L531.5 153.5M519.5 213.5 L531.5 213.5M519.5 218.5 L531.5 218.5M519.5 223.5 L531.5 223.5M519.5 228.5 L531.5 228.5M531.5 233.5 L513.5 233.5 L513.5 299.5M531.5 238.5 L508.5 238.5 L508.5 287.5M562.5 153.5 L572.5 153.5 L572.5 173.5 L574.5 173.5M562.5 158.5 L569.5 158.5 L569.5 178.5 L574.5 178.5M562.5 163.5 L566.5 163.5 L566.5 183.5 L574.5 183.5M562.5 168.5 L563.5 168.5 L563.5 188.5 L574.5 188.5M604.5 173.5 L611.5 173.5M623.5 173.5 L647.5 173.5M604.5 178.5 L611.5 178.5M623.5 178.5 L647.5 178.5M604.5 183.5 L611.5 183.5M623.5 183.5 L647.5 183.5M604.5 188.5 L611.5 188.5M623.5 188.5 L647.5 188.5M604.5 193.5 L611.5 193.5M623.5 193.5 L647.5 193.5M604.5 198.5 L611.5 198.5M623.5 198.5 L647.5 198.5M604.5 203.5 L611.5 203.5M623.5 203.5 L647.5 203.5M489.5 287.5 L526.5 287.5M491.5 299.5 L528.5 299.5M577.5 290.5 L584.5 290.5M594.5 290.5 L605.5 290.5M577.5 304.5 L584.5 304.5M594.5 304.5 L605.5 304.5M577.5 320.5 L584.5 320.5M594.5 320.5 L605.5 320.5M537.5 287.5 L566.5 287.5M556.5 287.5 L556.5 302.5 L566.5 302.5M539.5 299.5 L549.5 299.5M549.5 292.5 L566.5 292.5M549.5 292.5 L549.5 322.5 L566.5 322.5M518.5 287.5 L518.5 317.5 L566.5 317.5M521.5 299.5 L521.5 307.5 L566.5 307.5M201.5 325.5 L220.5 325.5M232.5 325.5 L242.5 325.5M266.5 345.5 L310.5 345.5 L310.5 352.5 L311.5 352.5M266.5 349.5 L293.5 349.5 L293.5 358.5 L311.5 358.5M266.5 360.5 L269.5 360.5 L269.5 367.5 L311.5 367.5M341.5 352.5 L371.5 352.5M389.5 352.5 L406.5 352.5M384.5 357.5 L406.5 357.5M418.5 355.5 L478.5 355.5M389.5 362.5 L406.5 362.5M384.5 367.5 L406.5 367.5M418.5 365.5 L422.5 365.5 L422.5 360.5 L478.5 360.5M389.5 373.5 L406.5 373.5M384.5 378.5 L406.5 378.5M418.5 375.5 L426.5 375.5 L426.5 365.5 L478.5 365.5M389.5 383.5 L406.5 383.5M384.5 388.5 L406.5 388.5M418.5 385.5 L429.5 385.5 L429.5 370.5 L478.5 370.5M389.5 393.5 L406.5 393.5M384.5 398.5 L406.5 398.5M418.5 395.5 L432.5 395.5 L432.5 375.5 L478.5 375.5M389.5 403.5 L406.5 403.5M384.5 408.5 L406.5 408.5M418.5 405.5 L436.5 405.5 L436.5 380.5 L478.5 380.5M389.5 413.5 L406.5 413.5M384.5 418.5 L406.5 418.5M418.5 416.5 L439.5 416.5 L439.5 385.5 L478.5 385.5M389.5 423.5 L406.5 423.5M384.5 428.5 L406.5 428.5M418.5 426.5 L442.5 426.5 L442.5 390.5 L478.5 390.5M442.5 355.5 L442.5 395.5 L478.5 395.5M447.5 360.5 L447.5 400.5 L478.5 400.5M451.5 365.5 L451.5 405.5 L478.5 405.5M455.5 370.5 L455.5 410.5 L478.5 410.5M458.5 375.5 L458.5 415.5 L478.5 415.5M466.5 380.5 L466.5 420.5 L478.5 420.5M471.5 385.5 L471.5 425.5 L478.5 425.5M475.5 390.5 L475.5 430.5 L478.5 430.5M473.5 435.5 L478.5 435.5M509.5 355.5 L533.5 355.5 L533.5 400.5 L556.5 400.5M509.5 360.5 L556.5 360.5M509.5 365.5 L556.5 365.5M509.5 370.5 L556.5 370.5M509.5 375.5 L556.5 375.5M509.5 380.5 L556.5 380.5M509.5 385.5 L556.5 385.5M509.5 390.5 L556.5 390.5M509.5 395.5 L556.5 395.5M551.5 405.5 L556.5 405.5M551.5 410.5 L556.5 410.5M551.5 415.5 L556.5 415.5M551.5 420.5 L556.5 420.5M551.5 425.5 L556.5 425.5M536.5 430.5 L556.5 430.5M551.5 435.5 L556.5 435.5M551.5 440.5 L556.5 440.5M586.5 360.5 L642.5 360.5M586.5 365.5 L642.5 365.5M586.5 370.5 L639.5 370.5M586.5 375.5 L637.5 375.5M586.5 380.5 L634.5 380.5M586.5 385.5 L629.5 385.5M586.5 390.5 L627.5 390.5M586.5 395.5 L624.5 395.5" class="wl"/><path d="M343.5 157.5 L378.5 157.5M343.5 162.5 L378.5 162.5M343.5 167.5 L378.5 167.5M343.5 172.5 L378.5 172.5M343.5 177.5 L378.5 177.5M343.5 182.5 L378.5 182.5M343.5 187.5 L378.5 187.5M343.5 192.5 L378.5 192.5M409.5 157.5 L420.5 157.5M409.5 162.5 L434.5 162.5M409.5 167.5 L434.5 167.5M409.5 172.5 L434.5 172.5M409.5 177.5 L434.5 177.5M409.5 182.5 L434.5 182.5M409.5 187.5 L434.5 187.5M409.5 192.5 L434.5 192.5M409.5 197.5 L434.5 197.5M232.5 251.5 L232.5 198.5 L378.5 198.5M229.5 263.5 L229.5 282.5M234.5 263.5 L234.5 309.5M247.5 251.5 L247.5 203.5 L378.5 203.5M244.5 263.5 L244.5 282.5M249.5 263.5 L249.5 309.5M262.5 251.5 L262.5 208.5 L378.5 208.5M260.5 263.5 L260.5 282.5M265.5 263.5 L265.5 309.5M277.5 251.5 L277.5 213.5 L378.5 213.5M275.5 263.5 L275.5 279.5M280.5 263.5 L280.5 309.5M292.5 251.5 L292.5 218.5 L378.5 218.5M290.5 263.5 L290.5 279.5M295.5 263.5 L295.5 309.5M307.5 251.5 L307.5 223.5 L378.5 223.5M305.5 263.5 L305.5 279.5M310.5 263.5 L310.5 309.5M322.5 251.5 L322.5 228.5 L378.5 228.5M320.5 263.5 L320.5 279.5M325.5 263.5 L325.5 309.5M338.5 251.5 L338.5 233.5 L378.5 233.5M335.5 263.5 L335.5 279.5M340.5 263.5 L340.5 309.5M235.5 309.5 L369.5 309.5M378.5 238.5 L356.5 238.5 L356.5 309.5M376.5 261.5 L376.5 246.5M374.5 272.5 L374.5 275.5 L368.5 275.5 L368.5 277.5M368.5 289.5 L368.5 295.5 L362.5 295.5M379.5 272.5 L379.5 300.5 L361.5 300.5 L361.5 309.5M379.5 284.5 L416.5 284.5M401.5 274.5 L416.5 274.5M411.5 279.5 L416.5 279.5M447.5 274.5 L464.5 274.5M449.5 157.5 L467.5 157.5M449.5 162.5 L467.5 162.5M449.5 167.5 L467.5 167.5M449.5 172.5 L467.5 172.5M449.5 177.5 L467.5 177.5M449.5 182.5 L467.5 182.5M449.5 187.5 L467.5 187.5M449.5 192.5 L467.5 192.5M449.5 197.5 L467.5 197.5M497.5 157.5 L530.5 157.5M497.5 162.5 L530.5 162.5M497.5 167.5 L530.5 167.5M497.5 172.5 L530.5 172.5M497.5 177.5 L530.5 177.5M497.5 182.5 L530.5 182.5M497.5 187.5 L530.5 187.5M497.5 192.5 L530.5 192.5M497.5 197.5 L530.5 197.5M497.5 202.5 L530.5 202.5M497.5 207.5 L530.5 207.5M518.5 152.5 L530.5 152.5M518.5 212.5 L530.5 212.5M518.5 217.5 L530.5 217.5M518.5 222.5 L530.5 222.5M518.5 227.5 L530.5 227.5M530.5 232.5 L512.5 232.5 L512.5 298.5M530.5 237.5 L507.5 237.5 L507.5 286.5M561.5 152.5 L571.5 152.5 L571.5 172.5 L573.5 172.5M561.5 157.5 L568.5 157.5 L568.5 177.5 L573.5 177.5M561.5 162.5 L565.5 162.5 L565.5 182.5 L573.5 182.5M561.5 167.5 L562.5 167.5 L562.5 187.5 L573.5 187.5M603.5 172.5 L610.5 172.5M622.5 172.5 L646.5 172.5M603.5 177.5 L610.5 177.5M622.5 177.5 L646.5 177.5M603.5 182.5 L610.5 182.5M622.5 182.5 L646.5 182.5M603.5 187.5 L610.5 187.5M622.5 187.5 L646.5 187.5M603.5 192.5 L610.5 192.5M622.5 192.5 L646.5 192.5M603.5 197.5 L610.5 197.5M622.5 197.5 L646.5 197.5M603.5 202.5 L610.5 202.5M622.5 202.5 L646.5 202.5M488.5 286.5 L525.5 286.5M490.5 298.5 L527.5 298.5M576.5 289.5 L583.5 289.5M593.5 289.5 L604.5 289.5M576.5 303.5 L583.5 303.5M593.5 303.5 L604.5 303.5M576.5 319.5 L583.5 319.5M593.5 319.5 L604.5 319.5M536.5 286.5 L565.5 286.5M555.5 286.5 L555.5 301.5 L565.5 301.5M538.5 298.5 L548.5 298.5M548.5 291.5 L565.5 291.5M548.5 291.5 L548.5 321.5 L565.5 321.5M517.5 286.5 L517.5 316.5 L565.5 316.5M520.5 298.5 L520.5 306.5 L565.5 306.5M200.5 324.5 L219.5 324.5M231.5 324.5 L241.5 324.5M265.5 344.5 L309.5 344.5 L309.5 351.5 L310.5 351.5M265.5 348.5 L292.5 348.5 L292.5 357.5 L310.5 357.5M265.5 359.5 L268.5 359.5 L268.5 366.5 L310.5 366.5M340.5 351.5 L370.5 351.5M388.5 351.5 L405.5 351.5M383.5 356.5 L405.5 356.5M417.5 354.5 L477.5 354.5M388.5 361.5 L405.5 361.5M383.5 366.5 L405.5 366.5M417.5 364.5 L421.5 364.5 L421.5 359.5 L477.5 359.5M388.5 372.5 L405.5 372.5M383.5 377.5 L405.5 377.5M417.5 374.5 L425.5 374.5 L425.5 364.5 L477.5 364.5M388.5 382.5 L405.5 382.5M383.5 387.5 L405.5 387.5M417.5 384.5 L428.5 384.5 L428.5 369.5 L477.5 369.5M388.5 392.5 L405.5 392.5M383.5 397.5 L405.5 397.5M417.5 394.5 L431.5 394.5 L431.5 374.5 L477.5 374.5M388.5 402.5 L405.5 402.5M383.5 407.5 L405.5 407.5M417.5 404.5 L435.5 404.5 L435.5 379.5 L477.5 379.5M388.5 412.5 L405.5 412.5M383.5 417.5 L405.5 417.5M417.5 415.5 L438.5 415.5 L438.5 384.5 L477.5 384.5M388.5 422.5 L405.5 422.5M383.5 427.5 L405.5 427.5M417.5 425.5 L441.5 425.5 L441.5 389.5 L477.5 389.5M441.5 354.5 L441.5 394.5 L477.5 394.5M446.5 359.5 L446.5 399.5 L477.5 399.5M450.5 364.5 L450.5 404.5 L477.5 404.5M454.5 369.5 L454.5 409.5 L477.5 409.5M457.5 374.5 L457.5 414.5 L477.5 414.5M465.5 379.5 L465.5 419.5 L477.5 419.5M470.5 384.5 L470.5 424.5 L477.5 424.5M474.5 389.5 L474.5 429.5 L477.5 429.5M472.5 434.5 L477.5 434.5M508.5 354.5 L532.5 354.5 L532.5 399.5 L555.5 399.5M508.5 359.5 L555.5 359.5M508.5 364.5 L555.5 364.5M508.5 369.5 L555.5 369.5M508.5 374.5 L555.5 374.5M508.5 379.5 L555.5 379.5M508.5 384.5 L555.5 384.5M508.5 389.5 L555.5 389.5M508.5 394.5 L555.5 394.5M550.5 404.5 L555.5 404.5M550.5 409.5 L555.5 409.5M550.5 414.5 L555.5 414.5M550.5 419.5 L555.5 419.5M550.5 424.5 L555.5 424.5M535.5 429.5 L555.5 429.5M550.5 434.5 L555.5 434.5M550.5 439.5 L555.5 439.5M585.5 359.5 L641.5 359.5M585.5 364.5 L641.5 364.5M585.5 369.5 L638.5 369.5M585.5 374.5 L636.5 374.5M585.5 379.5 L633.5 379.5M585.5 384.5 L628.5 384.5M585.5 389.5 L626.5 389.5M585.5 394.5 L623.5 394.5" class="w"/>
<text x="338.0" y="158.6" class="tp" text-anchor="end">Pin_11</text>
<rect x="339.0" y="155.0" width="4" height="4" class="pin"/>
<text x="365.0" y="161.4" class="t">A7</text>
<text x="338.0" y="163.6" class="tp" text-anchor="end">Pin_12</text>
<rect x="339.0" y="160.0" width="4" height="4" class="pin"/>
<text x="365.0" y="166.4" class="t">A6</text>
<text x="338.0" y="168.6" class="tp" text-anchor="end">Pin_13</text>
<rect x="339.0" y="165.0" width="4" height="4" class="pin"/>
<text x="365.0" y="171.4" class="t">A5</text>
<text x="338.0" y="173.6" class="tp" text-anchor="end">Pin_14</text>
<rect x="339.0" y="170.0" width="4" height="4" class="pin"/>
<text x="365.0" y="176.4" class="t">A4</text>
<text x="338.0" y="178.6" class="tp" text-anchor="end">Pin_15</text>
<rect x="339.0" y="175.0" width="4" height="4" class="pin"/>
<text x="365.0" y="181.4" class="t">A3</text>
<text x="338.0" y="183.6" class="tp" text-anchor="end">Pin_16</text>
<rect x="339.0" y="180.0" width="4" height="4" class="pin"/>
<text x="365.0" y="186.4" class="t">A2</text>
<text x="338.0" y="188.6" class="tp" text-anchor="end">Pin_17</text>
<rect x="339.0" y="185.0" width="4" height="4" class="pin"/>
<text x="365.0" y="191.4" class="t">A1</text>
<text x="338.0" y="193.6" class="tp" text-anchor="end">Pin_18</text>
<rect x="339.0" y="190.0" width="4" height="4" class="pin"/>
<text x="365.0" y="196.4" class="t">A0</text>
<rect x="378.5" y="147.5" width="31.0" height="94.0" class="blk"/>
<rect x="379.3" y="148.3" width="29.4" height="4.5" fill="#90ee90"/>
<path d="M378.5 153.2H409.5" stroke="#111" stroke-width="1.2"/>
<text x="408.0" y="145.9" class="tt" text-anchor="end">SumaBit_1</text>
<text x="394.0" y="152.0" class="th" text-anchor="middle">SumaBit</text>
<text x="380.5" y="159.2" class="tb">A7</text>
<text x="380.5" y="164.2" class="tb">A6</text>
<text x="380.5" y="169.2" class="tb">A5</text>
<text x="380.5" y="174.2" class="tb">A4</text>
<text x="380.5" y="179.2" class="tb">A3</text>
<text x="380.5" y="184.2" class="tb">A2</text>
<text x="380.5" y="189.2" class="tb">A1</text>
<text x="380.5" y="194.2" class="tb">A0</text>
<text x="380.5" y="199.2" class="tb">B7</text>
<text x="380.5" y="204.2" class="tb">B6</text>
<text x="380.5" y="209.2" class="tb">B5</text>
<text x="380.5" y="214.2" class="tb">B4</text>
<text x="380.5" y="219.2" class="tb">B3</text>
<text x="380.5" y="224.2" class="tb">B2</text>
<text x="380.5" y="229.2" class="tb">B1</text>
<text x="380.5" y="234.2" class="tb">B0</text>
<text x="380.5" y="239.2" class="tb">Ci</text>
<text x="407.5" y="159.2" class="tb" text-anchor="end">D8</text>
<text x="407.5" y="164.2" class="tb" text-anchor="end">D7</text>
<text x="407.5" y="169.2" class="tb" text-anchor="end">D6</text>
<text x="407.5" y="174.2" class="tb" text-anchor="end">D5</text>
<text x="407.5" y="179.2" class="tb" text-anchor="end">D4</text>
<text x="407.5" y="184.2" class="tb" text-anchor="end">D3</text>
<text x="407.5" y="189.2" class="tb" text-anchor="end">D2</text>
<text x="407.5" y="194.2" class="tb" text-anchor="end">D1</text>
<text x="407.5" y="199.2" class="tb" text-anchor="end">D0</text>
<text x="421.0" y="160.5" class="t">D8</text>
<text x="425.5" y="166.6" class="t">D7</text>
<text x="425.5" y="171.6" class="t">D6</text>
<text x="425.5" y="176.6" class="t">D5</text>
<text x="425.5" y="181.6" class="t">D4</text>
<text x="425.5" y="186.6" class="t">D3</text>
<text x="425.5" y="191.6" class="t">D2</text>
<text x="425.5" y="196.6" class="t">D1</text>
<text x="425.5" y="201.6" class="t">D0</text>
<text x="305.1" y="197.2" class="t">B7</text>
<path d="M227.4 263 Q227.4 255 232.4 251 Q237.4 255 237.4 263 Q232.4 259.5 227.4 263z" class="g"/>
<path d="M227.4 265 Q232.4 261.5 237.4 265" class="g" fill="none"/>
<rect x="227.9" y="282.0" width="4" height="4" class="pin"/>
<text transform="translate(231.4,299.0) rotate(-90)" class="tp">Pin_19</text>
<text x="313.4" y="202.2" class="t">B6</text>
<path d="M242.49 263 Q242.49 255 247.49 251 Q252.49 255 252.49 263 Q247.49 259.5 242.49 263z" class="g"/>
<path d="M242.49 265 Q247.49 261.5 252.49 265" class="g" fill="none"/>
<rect x="243.0" y="282.0" width="4" height="4" class="pin"/>
<text transform="translate(246.5,299.0) rotate(-90)" class="tp">Pin_20</text>
<rect x="249.0" y="308.0" width="2" height="2" class="j"/>
<text x="323.5" y="207.2" class="t">B5</text>
<path d="M257.58 263 Q257.58 255 262.58 251 Q267.58 255 267.58 263 Q262.58 259.5 257.58 263z" class="g"/>
<path d="M257.58 265 Q262.58 261.5 267.58 265" class="g" fill="none"/>
<rect x="258.1" y="282.0" width="4" height="4" class="pin"/>
<text transform="translate(261.6,299.0) rotate(-90)" class="tp">Pin_21</text>
<rect x="264.1" y="308.0" width="2" height="2" class="j"/>
<text x="330.5" y="212.2" class="t">B4</text>
<path d="M272.67 263 Q272.67 255 277.67 251 Q282.67 255 282.67 263 Q277.67 259.5 272.67 263z" class="g"/>
<path d="M272.67 265 Q277.67 261.5 282.67 265" class="g" fill="none"/>
<rect x="273.2" y="279.5" width="4" height="4" class="pin"/>
<text transform="translate(276.7,296.5) rotate(-90)" class="tp">Pin_22</text>
<rect x="279.2" y="308.0" width="2" height="2" class="j"/>
<text x="338.0" y="217.2" class="t">B3</text>
<path d="M287.76 263 Q287.76 255 292.76 251 Q297.76 255 297.76 263 Q292.76 259.5 287.76 263z" class="g"/>
<path d="M287.76 265 Q292.76 261.5 297.76 265" class="g" fill="none"/>
<rect x="288.3" y="279.5" width="4" height="4" class="pin"/>
<text transform="translate(291.8,296.5) rotate(-90)" class="tp">Pin_23</text>
<rect x="294.3" y="308.0" width="2" height="2" class="j"/>
<text x="346.3" y="222.2" class="t">B2</text>
<path d="M302.85 263 Q302.85 255 307.85 251 Q312.85 255 312.85 263 Q307.85 259.5 302.85 263z" class="g"/>
<path d="M302.85 265 Q307.85 261.5 312.85 265" class="g" fill="none"/>
<rect x="303.4" y="279.5" width="4" height="4" class="pin"/>
<text transform="translate(306.9,296.5) rotate(-90)" class="tp">Pin_24</text>
<rect x="309.4" y="308.0" width="2" height="2" class="j"/>
<text x="353.1" y="227.2" class="t">B1</text>
<path d="M317.94 263 Q317.94 255 322.94 251 Q327.94 255 327.94 263 Q322.94 259.5 317.94 263z" class="g"/>
<path d="M317.94 265 Q322.94 261.5 327.94 265" class="g" fill="none"/>
<rect x="318.4" y="279.5" width="4" height="4" class="pin"/>
<text transform="translate(321.9,296.5) rotate(-90)" class="tp">Pin_25</text>
<rect x="324.4" y="308.0" width="2" height="2" class="j"/>
<text x="361.4" y="232.2" class="t">B0</text>
<path d="M333.03 263 Q333.03 255 338.03 251 Q343.03 255 343.03 263 Q338.03 259.5 333.03 263z" class="g"/>
<path d="M333.03 265 Q338.03 261.5 343.03 265" class="g" fill="none"/>
<rect x="333.5" y="279.5" width="4" height="4" class="pin"/>
<text transform="translate(337.0,296.5) rotate(-90)" class="tp">Pin_26</text>
<rect x="339.5" y="308.0" width="2" height="2" class="j"/>
<rect x="355.0" y="308.0" width="2" height="2" class="j"/>
<text x="362.0" y="236.5" class="t">B0</text>
<rect x="369.5" y="307.0" width="4" height="4" class="pin"/>
<text x="375.0" y="311.0" class="tp">Pin_27</text>
<path d="M371.5 272V266a5.2 5.2 0 0 1 10.4 0V272z" class="g"/>
<text x="378.0" y="253.0" class="t">H</text>
<path d="M363.8 289L368.7 279.5L373.6 289z" class="g"/><circle cx="368.7" cy="278.3" r="1.2" class="g"/>
<text x="367.0" y="298.5" class="t">G8</text>
<rect x="360.0" y="308.0" width="2" height="2" class="j"/>
<rect x="378.5" y="283.0" width="2" height="2" class="j"/>
<rect x="416.5" y="264.0" width="30.5" height="23.5" class="blk"/>
<rect x="417.3" y="264.8" width="28.9" height="4.0" fill="#f4f4f4"/>
<path d="M416.5 269.2H447.0" stroke="#111" stroke-width="1.2"/>
<text x="445.5" y="262.4" class="tt" text-anchor="end">MUX2x1_1</text>
<text x="431.8" y="268.0" class="th" text-anchor="middle">MUX2x1</text>
<text x="418.5" y="275.5" class="tb">A</text>
<text x="418.5" y="280.5" class="tb">B</text>
<text x="418.5" y="285.5" class="tb">S</text>
<text x="445.0" y="275.5" class="tb" text-anchor="end">O</text>
<text x="410.0" y="276.0" class="t">B8</text>
<rect x="404" y="276.5" width="7.5" height="4.5" class="pin2"/>
<text x="459.0" y="277.0" class="t">G8</text>
<rect x="467.5" y="147.0" width="30.0" height="65.0" class="blk"/>
<rect x="468.3" y="147.8" width="28.4" height="4.5" fill="#90ee90"/>
<path d="M467.5 152.7H497.5" stroke="#111" stroke-width="1.2"/>
<text x="496.0" y="145.4" class="tt" text-anchor="end">Binary9_BCD_1</text>
<text x="482.5" y="151.5" class="th" text-anchor="middle">Binary9_BCD</text>
<text x="458.5" y="161.6" class="t">H8</text>
<text x="469.5" y="158.6" class="tb">B8</text>
<text x="458.5" y="166.6" class="t">H7</text>
<text x="469.5" y="163.6" class="tb">B7</text>
<text x="458.5" y="171.6" class="t">H6</text>
<text x="469.5" y="168.6" class="tb">B6</text>
<text x="458.5" y="176.6" class="t">H5</text>
<text x="469.5" y="173.6" class="tb">B5</text>
<text x="458.5" y="181.6" class="t">H4</text>
<text x="469.5" y="178.6" class="tb">B4</text>
<text x="458.5" y="186.6" class="t">H3</text>
<text x="469.5" y="183.6" class="tb">B3</text>
<text x="458.5" y="191.6" class="t">H2</text>
<text x="469.5" y="188.6" class="tb">B2</text>
<text x="458.5" y="196.6" class="t">H1</text>
<text x="469.5" y="193.6" class="tb">B1</text>
<text x="458.5" y="201.6" class="t">H0</text>
<text x="469.5" y="198.6" class="tb">B0</text>
<text x="495.5" y="158.6" class="tb" text-anchor="end">Y10</text>
<text x="495.5" y="163.6" class="tb" text-anchor="end">Y9</text>
<text x="495.5" y="168.6" class="tb" text-anchor="end">Y8</text>
<text x="495.5" y="173.6" class="tb" text-anchor="end">Y7</text>
<text x="495.5" y="178.6" class="tb" text-anchor="end">Y6</text>
<text x="495.5" y="183.6" class="tb" text-anchor="end">Y5</text>
<text x="495.5" y="188.6" class="tb" text-anchor="end">Y4</text>
<text x="495.5" y="193.6" class="tb" text-anchor="end">Y3</text>
<text x="495.5" y="198.6" class="tb" text-anchor="end">Y2</text>
<text x="495.5" y="203.6" class="tb" text-anchor="end">Y1</text>
<text x="495.5" y="208.6" class="tb" text-anchor="end">Y0</text>
<rect x="530.5" y="142.7" width="30.5" height="99.5" class="blk"/>
<rect x="531.3" y="143.5" width="28.9" height="4.5" fill="#90ee90"/>
<path d="M530.5 148.4H561.0" stroke="#111" stroke-width="1.2"/>
<text x="559.5" y="141.1" class="tt" text-anchor="end">Mux16_1</text>
<text x="545.8" y="147.2" class="th" text-anchor="middle">Mux16_4</text>
<text x="532.5" y="153.6" class="tb">A3</text>
<text x="532.5" y="158.6" class="tb">A2</text>
<text x="532.5" y="163.6" class="tb">A1</text>
<text x="532.5" y="168.6" class="tb">A0</text>
<text x="532.5" y="173.6" class="tb">B3</text>
<text x="532.5" y="178.6" class="tb">B2</text>
<text x="532.5" y="183.6" class="tb">B1</text>
<text x="532.5" y="188.6" class="tb">B0</text>
<text x="532.5" y="193.6" class="tb">C3</text>
<text x="532.5" y="198.6" class="tb">C2</text>
<text x="532.5" y="203.6" class="tb">C1</text>
<text x="532.5" y="208.6" class="tb">C0</text>
<text x="532.5" y="213.6" class="tb">D3</text>
<text x="532.5" y="218.6" class="tb">D2</text>
<text x="532.5" y="223.6" class="tb">D1</text>
<text x="532.5" y="228.6" class="tb">D0</text>
<text x="532.5" y="233.6" class="tb">S0</text>
<text x="532.5" y="238.6" class="tb">S1</text>
<text x="559.0" y="153.6" class="tb" text-anchor="end">M3</text>
<text x="559.0" y="158.6" class="tb" text-anchor="end">M2</text>
<text x="559.0" y="163.6" class="tb" text-anchor="end">M1</text>
<text x="559.0" y="168.6" class="tb" text-anchor="end">M0</text>
<rect x="510" y="150.3" width="8" height="4.5" class="pin2"/>
<rect x="510" y="210.7" width="8" height="4.6" class="pin2"/>
<rect x="510" y="215.7" width="8" height="4.6" class="pin2"/>
<rect x="510" y="220.7" width="8" height="4.6" class="pin2"/>
<rect x="510" y="225.7" width="8" height="4.6" class="pin2"/>
<rect x="573.5" y="163.0" width="30.0" height="44.0" class="blk"/>
<rect x="574.3" y="163.8" width="28.4" height="4.5" fill="#90ee90"/>
<path d="M573.5 168.7H603.5" stroke="#111" stroke-width="1.2"/>
<text x="602.0" y="161.4" class="tt" text-anchor="end">BCD_7SEG_1</text>
<text x="588.5" y="167.5" class="th" text-anchor="middle">BCD_7SEG</text>
<text x="575.5" y="174.0" class="tb">D3</text>
<text x="575.5" y="179.0" class="tb">D2</text>
<text x="575.5" y="184.0" class="tb">D1</text>
<text x="575.5" y="189.0" class="tb">D0</text>
<text x="601.5" y="174.1" class="tb" text-anchor="end">A</text>
<path d="M610.7 167.5L619 172.5L610.7 177.5z" class="g" fill="none"/><circle cx="620.5" cy="172.5" r="1.4" class="g"/>
<rect x="646.6" y="170.5" width="4" height="4" class="pin"/>
<text x="652.0" y="174.3" class="tp">Pin_1</text>
<text x="601.5" y="179.1" class="tb" text-anchor="end">B</text>
<path d="M610.7 172.5L619 177.5L610.7 182.5z" class="g" fill="none"/><circle cx="620.5" cy="177.5" r="1.4" class="g"/>
<rect x="646.6" y="175.5" width="4" height="4" class="pin"/>
<text x="652.0" y="179.3" class="tp">Pin_2</text>
<text x="601.5" y="184.1" class="tb" text-anchor="end">C</text>
<path d="M610.7 177.5L619 182.5L610.7 187.5z" class="g" fill="none"/><circle cx="620.5" cy="182.5" r="1.4" class="g"/>
<rect x="646.6" y="180.5" width="4" height="4" class="pin"/>
<text x="652.0" y="184.3" class="tp">Pin_3</text>
<text x="601.5" y="189.1" class="tb" text-anchor="end">D</text>
<path d="M610.7 182.5L619 187.5L610.7 192.5z" class="g" fill="none"/><circle cx="620.5" cy="187.5" r="1.4" class="g"/>
<rect x="646.6" y="185.5" width="4" height="4" class="pin"/>
<text x="652.0" y="189.3" class="tp">Pin_4</text>
<text x="601.5" y="194.1" class="tb" text-anchor="end">E</text>
<path d="M610.7 187.5L619 192.5L610.7 197.5z" class="g" fill="none"/><circle cx="620.5" cy="192.5" r="1.4" class="g"/>
<rect x="646.6" y="190.5" width="4" height="4" class="pin"/>
<text x="652.0" y="194.3" class="tp">Pin_5</text>
<text x="601.5" y="199.1" class="tb" text-anchor="end">F</text>
<path d="M610.7 192.5L619 197.5L610.7 202.5z" class="g" fill="none"/><circle cx="620.5" cy="197.5" r="1.4" class="g"/>
<rect x="646.6" y="195.5" width="4" height="4" class="pin"/>
<text x="652.0" y="199.3" class="tp">Pin_6</text>
<text x="601.5" y="204.1" class="tb" text-anchor="end">G</text>
<path d="M610.7 197.5L619 202.5L610.7 207.5z" class="g" fill="none"/><circle cx="620.5" cy="202.5" r="1.4" class="g"/>
<rect x="646.6" y="200.5" width="4" height="4" class="pin"/>
<text x="652.0" y="204.3" class="tp">Pin_7</text>
<text x="488.0" y="285.0" class="tl">bus[3]</text>
<text x="488.0" y="297.0" class="tl">bus[0]</text>
<rect x="506.4" y="285.4" width="2" height="2" class="j"/>
<rect x="511.7" y="297.6" width="2" height="2" class="j"/>
<path d="M525 281.9L533 286.4L525 290.9z" class="g" fill="none"/><circle cx="534.2" cy="286.4" r="1.3" class="g"/>
<path d="M527.5 294.1L535.5 298.6L527.5 303.1z" class="g" fill="none"/><circle cx="536.7" cy="298.6" r="1.3" class="g"/>
<path d="M565 283.8H570.5a5.2 5.2 0 0 1 0 10.4H565z" class="g"/>
<path d="M583 284.5L591 289.0L583 293.5z" class="g" fill="none"/><circle cx="592.2" cy="289.0" r="1.3" class="g"/>
<rect x="604.5" y="287.0" width="4" height="4" class="pin"/>
<path d="M565 298.5H570.5a5.2 5.2 0 0 1 0 10.4H565z" class="g"/>
<path d="M583 299.2L591 303.7L583 308.2z" class="g" fill="none"/><circle cx="592.2" cy="303.7" r="1.3" class="g"/>
<rect x="604.5" y="301.7" width="4" height="4" class="pin"/>
<path d="M565 313.8H570.5a5.2 5.2 0 0 1 0 10.4H565z" class="g"/>
<path d="M583 314.5L591 319.0L583 323.5z" class="g" fill="none"/><circle cx="592.2" cy="319.0" r="1.3" class="g"/>
<rect x="604.5" y="317.0" width="4" height="4" class="pin"/>
<text x="609.0" y="291.0" class="tp">Pin_8</text>
<text x="609.0" y="305.7" class="tp">Pin_9</text>
<text x="609.0" y="321.0" class="tp">Pin_10</text>
<rect x="554.5" y="285.4" width="2" height="2" class="j"/>
<rect x="547.0" y="297.6" width="2" height="2" class="j"/>
<rect x="516.5" y="285.4" width="2" height="2" class="j"/>
<rect x="519.0" y="297.6" width="2" height="2" class="j"/>
<path d="M219 319.7L228 324.2L219 328.7z" class="g" fill="none"/><circle cx="229.2" cy="324.2" r="1.3" class="g"/>
<rect x="241.0" y="322.2" width="4" height="4" class="pin"/>
<text x="246.0" y="326.0" class="tp">Pin_28</text>
<text x="208.0" y="328.0" class="t">H</text>
<rect x="310.7" y="341.7" width="30.0" height="30.5" class="blk"/>
<rect x="311.5" y="342.5" width="28.4" height="4.5" fill="#90ee90"/>
<path d="M310.7 347.4H340.7" stroke="#111" stroke-width="1.2"/>
<text x="339.2" y="340.1" class="tt" text-anchor="end">BasicCounter_1</text>
<text x="325.7" y="346.2" class="th" text-anchor="middle">BasicCounter</text>
<text x="312.5" y="353.6" class="tp">en</text>
<text x="312.5" y="358.6" class="tp">reset</text>
<text x="314.0" y="368.6" class="tp">clock</text>
<text x="339.5" y="353.6" class="tp" text-anchor="end">cnt[1:0]</text>
<rect x="257.2" y="342.4" width="8.4" height="4.2" class="pin2"/><rect x="257.2" y="346.6" width="8.4" height="4.2" class="pin2"/>
<rect x="291.7" y="347.6" width="2" height="2" class="j"/>
<rect x="257" y="357" width="8" height="4.5" fill="#111"/>
<text x="256.0" y="361.0" class="tp" text-anchor="end">Clock_1</text>
<text x="258.0" y="366.0" class="tp">1Hz</text>
<text x="349.0" y="355.0" class="tl">Dato[1:0]</text>
<path d="M404.2 349.3Q412 349.3 417 354.3Q412 359.3 404.2 359.3Q407 354.3 404.2 349.3z" class="g"/>
<path d="M402.6 349.3Q405.4 354.3 402.6 359.3" class="g" fill="none"/>
<text x="395.0" y="354.8" class="t">H</text>
<text x="390.0" y="359.8" class="t">D7</text>
<path d="M404.2 359.4Q412 359.4 417 364.4Q412 369.4 404.2 369.4Q407 364.4 404.2 359.4z" class="g"/>
<path d="M402.6 359.4Q405.4 364.4 402.6 369.4" class="g" fill="none"/>
<text x="395.0" y="364.9" class="t">H</text>
<text x="390.0" y="369.9" class="t">D6</text>
<path d="M404.2 369.6Q412 369.6 417 374.6Q412 379.6 404.2 379.6Q407 374.6 404.2 369.6z" class="g"/>
<path d="M402.6 369.6Q405.4 374.6 402.6 379.6" class="g" fill="none"/>
<text x="395.0" y="375.1" class="t">H</text>
<text x="390.0" y="380.1" class="t">D5</text>
<path d="M404.2 379.7Q412 379.7 417 384.7Q412 389.7 404.2 389.7Q407 384.7 404.2 379.7z" class="g"/>
<path d="M402.6 379.7Q405.4 384.7 402.6 389.7" class="g" fill="none"/>
<text x="395.0" y="385.2" class="t">H</text>
<text x="390.0" y="390.2" class="t">D4</text>
<path d="M404.2 389.8Q412 389.8 417 394.8Q412 399.8 404.2 399.8Q407 394.8 404.2 389.8z" class="g"/>
<path d="M402.6 389.8Q405.4 394.8 402.6 399.8" class="g" fill="none"/>
<text x="395.0" y="395.3" class="t">H</text>
<text x="390.0" y="400.3" class="t">D3</text>
<path d="M404.2 400.0Q412 400.0 417 405.0Q412 410.0 404.2 410.0Q407 405.0 404.2 400.0z" class="g"/>
<path d="M402.6 400.0Q405.4 405.0 402.6 410.0" class="g" fill="none"/>
<text x="395.0" y="405.5" class="t">H</text>
<text x="390.0" y="410.5" class="t">D2</text>
<path d="M404.2 410.1Q412 410.1 417 415.1Q412 420.1 404.2 420.1Q407 415.1 404.2 410.1z" class="g"/>
<path d="M402.6 410.1Q405.4 415.1 402.6 420.1" class="g" fill="none"/>
<text x="395.0" y="415.6" class="t">H</text>
<text x="390.0" y="420.6" class="t">D1</text>
<path d="M404.2 420.2Q412 420.2 417 425.2Q412 430.2 404.2 430.2Q407 425.2 404.2 420.2z" class="g"/>
<path d="M402.6 420.2Q405.4 425.2 402.6 430.2" class="g" fill="none"/>
<text x="395.0" y="425.7" class="t">H</text>
<text x="390.0" y="430.7" class="t">D0</text>
<rect x="440.6" y="353.0" width="2" height="2" class="j"/>
<rect x="445.7" y="358.0" width="2" height="2" class="j"/>
<rect x="449.5" y="363.0" width="2" height="2" class="j"/>
<rect x="453.8" y="368.0" width="2" height="2" class="j"/>
<rect x="456.3" y="373.0" width="2" height="2" class="j"/>
<rect x="464.0" y="378.0" width="2" height="2" class="j"/>
<rect x="469.0" y="383.0" width="2" height="2" class="j"/>
<rect x="473.0" y="388.0" width="2" height="2" class="j"/>
<rect x="477.0" y="344.0" width="31.0" height="95.0" class="blk"/>
<rect x="477.8" y="344.8" width="29.4" height="4.5" fill="#90ee90"/>
<path d="M477.0 349.7H508.0" stroke="#111" stroke-width="1.2"/>
<text x="506.5" y="342.4" class="tt" text-anchor="end">SumaBit_2</text>
<text x="492.5" y="348.5" class="th" text-anchor="middle">SumaBit</text>
<text x="479.0" y="355.6" class="tb">A7</text>
<text x="479.0" y="360.6" class="tb">A6</text>
<text x="479.0" y="365.6" class="tb">A5</text>
<text x="479.0" y="370.6" class="tb">A4</text>
<text x="479.0" y="375.6" class="tb">A3</text>
<text x="479.0" y="380.6" class="tb">A2</text>
<text x="479.0" y="385.6" class="tb">A1</text>
<text x="479.0" y="390.6" class="tb">A0</text>
<text x="479.0" y="395.6" class="tb">B7</text>
<text x="479.0" y="400.6" class="tb">B6</text>
<text x="479.0" y="405.6" class="tb">B5</text>
<text x="479.0" y="410.6" class="tb">B4</text>
<text x="479.0" y="415.6" class="tb">B3</text>
<text x="479.0" y="420.6" class="tb">B2</text>
<text x="479.0" y="425.6" class="tb">B1</text>
<text x="479.0" y="430.6" class="tb">B0</text>
<text x="479.0" y="435.6" class="tb">Ci</text>
<text x="506.0" y="355.6" class="tb" text-anchor="end">D8</text>
<text x="506.0" y="360.6" class="tb" text-anchor="end">D7</text>
<text x="506.0" y="365.6" class="tb" text-anchor="end">D6</text>
<text x="506.0" y="370.6" class="tb" text-anchor="end">D5</text>
<text x="506.0" y="375.6" class="tb" text-anchor="end">D4</text>
<text x="506.0" y="380.6" class="tb" text-anchor="end">D3</text>
<text x="506.0" y="385.6" class="tb" text-anchor="end">D2</text>
<text x="506.0" y="390.6" class="tb" text-anchor="end">D1</text>
<text x="506.0" y="395.6" class="tb" text-anchor="end">D0</text>
<rect x="465" y="432" width="7.5" height="4.5" class="pin2"/>
<rect x="555.7" y="349.7" width="29.9" height="94.3" class="blk"/>
<rect x="556.5" y="350.5" width="28.3" height="4.5" fill="#90ee90"/>
<path d="M555.7 355.4H585.6" stroke="#111" stroke-width="1.2"/>
<text x="584.1" y="348.1" class="tt" text-anchor="end">SumaBit_3</text>
<text x="570.7" y="354.2" class="th" text-anchor="middle">SumaBit</text>
<text x="557.7" y="360.6" class="tb">A7</text>
<text x="557.7" y="365.6" class="tb">A6</text>
<text x="557.7" y="370.6" class="tb">A5</text>
<text x="557.7" y="375.6" class="tb">A4</text>
<text x="557.7" y="380.6" class="tb">A3</text>
<text x="557.7" y="385.6" class="tb">A2</text>
<text x="557.7" y="390.6" class="tb">A1</text>
<text x="557.7" y="395.6" class="tb">A0</text>
<text x="557.7" y="400.6" class="tb">B7</text>
<text x="557.7" y="405.6" class="tb">B6</text>
<text x="557.7" y="410.6" class="tb">B5</text>
<text x="557.7" y="415.6" class="tb">B4</text>
<text x="557.7" y="420.6" class="tb">B3</text>
<text x="557.7" y="425.6" class="tb">B2</text>
<text x="557.7" y="430.6" class="tb">B1</text>
<text x="557.7" y="435.6" class="tb">B0</text>
<text x="557.7" y="440.6" class="tb">Ci</text>
<text x="583.6" y="360.6" class="tb" text-anchor="end">D8</text>
<text x="583.6" y="365.6" class="tb" text-anchor="end">D7</text>
<text x="583.6" y="370.6" class="tb" text-anchor="end">D6</text>
<text x="583.6" y="375.6" class="tb" text-anchor="end">D5</text>
<text x="583.6" y="380.6" class="tb" text-anchor="end">D4</text>
<text x="583.6" y="385.6" class="tb" text-anchor="end">D3</text>
<text x="583.6" y="390.6" class="tb" text-anchor="end">D2</text>
<text x="583.6" y="395.6" class="tb" text-anchor="end">D1</text>
<text x="583.6" y="400.6" class="tb" text-anchor="end">D0</text>
<rect x="543" y="401.7" width="7.6" height="4.6" class="pin2"/>
<rect x="543" y="406.7" width="7.6" height="4.6" class="pin2"/>
<rect x="543" y="411.7" width="7.6" height="4.6" class="pin2"/>
<rect x="543" y="416.7" width="7.6" height="4.6" class="pin2"/>
<rect x="543" y="421.7" width="7.6" height="4.6" class="pin2"/>
<text x="546.0" y="431.0" class="t">H</text>
<rect x="543" y="431.7" width="7.6" height="4.6" class="pin2"/>
<rect x="543" y="436.7" width="7.6" height="4.6" class="pin2"/>
<text x="633.7" y="362.0" class="t">H7</text>
<text x="633.0" y="367.0" class="t">H6</text>
<text x="631.5" y="372.0" class="t">H5</text>
<text x="629.0" y="377.0" class="t">H4</text>
<text x="626.6" y="382.0" class="t">H3</text>
<text x="621.6" y="387.0" class="t">H2</text>
<text x="620.0" y="392.0" class="t">H1</text>
<text x="616.6" y="397.0" class="t">H0</text>
<text x="587.0" y="401.0" class="tb">D0</text>
<rect x="590" y="397" width="3.5" height="4" class="pin"/></g></svg>
<div style="position:absolute;left:0;top:104px;width:16px;height:22px;background:#d5ecfb;border:1px solid #4d9ad6;border-left:none"></div>
<svg class="ico" width="862" height="474" viewBox="0 0 862 474">
<path d="M2.5 108.5v12l3-3 2.5 5 1.8-.9-2.3-4.8h4z" fill="#fff" stroke="#555" stroke-width="0.9"/>
<path d="M0.5 131.5h4v11h6" fill="none" stroke="#2a4a9a" stroke-width="1.1"/>
<rect x="0" y="129.5" width="2" height="3" fill="#111"/><rect x="10" y="140.8" width="3" height="3.4" fill="#fff" stroke="#111" stroke-width="1"/>
<path d="M5.3 152.3l6.5 6.5-6.5 6.5-6.5-6.5z" fill="none" stroke="#0f5f0f" stroke-width="2.7"/>
<rect x="-1" y="175.8" width="13.3" height="10.4" fill="none" stroke="#111" stroke-width="1.2"/>
<ellipse cx="5" cy="202.7" rx="7.3" ry="5.3" fill="none" stroke="#111" stroke-width="1.2"/>
<path d="M0 218l11 12.5" stroke="#222" stroke-width="1"/>
<path d="M-1 242q10 0 12 11" fill="none" stroke="#222" stroke-width="1"/>
<text x="-1" y="276" font-family="Liberation Serif" font-size="17" fill="#1a3a7a">T</text>
<rect x="0" y="283.5" width="11" height="10" fill="#cfe0f5" stroke="#555" stroke-width="0.8"/><path d="M0 292l4-4 3 2 4-3v6h-11z" fill="#6a8ac0"/><circle cx="8" cy="286" r="1.2" fill="#e06020"/>
</svg>
</body></html>
